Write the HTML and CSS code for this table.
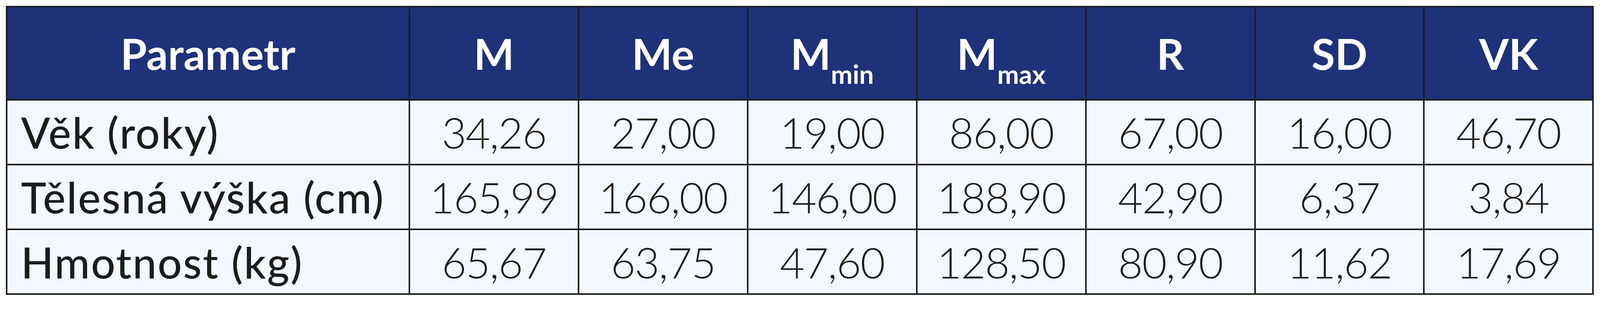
FILE: index.html
```html
<!DOCTYPE html>
<html lang="cs">
<head>
<meta charset="utf-8">
<title>Parametry</title>
<link rel="stylesheet" href="styles.css">
</head>
<body>
<div class="wrap">
<table class="stats">
  <colgroup>
    <col class="c-label">
    <col class="c-num"><col class="c-num"><col class="c-num"><col class="c-num"><col class="c-num"><col class="c-num"><col class="c-num">
  </colgroup>
  <thead>
    <tr>
      <th>Parametr</th>
      <th>M</th>
      <th>Me</th>
      <th>M<span class="sub">min</span></th>
      <th>M<span class="sub">max</span></th>
      <th>R</th>
      <th>SD</th>
      <th>VK</th>
    </tr>
  </thead>
  <tbody>
    <tr>
      <td class="label">Věk (roky)</td>
      <td>34,26</td><td>27,00</td><td>19,00</td><td>86,00</td><td>67,00</td><td>16,00</td><td>46,70</td>
    </tr>
    <tr>
      <td class="label">Tělesná výška (cm)</td>
      <td>165,99</td><td>166,00</td><td>146,00</td><td>188,90</td><td>42,90</td><td>6,37</td><td>3,84</td>
    </tr>
    <tr>
      <td class="label">Hmotnost (kg)</td>
      <td>65,67</td><td>63,75</td><td>47,60</td><td>128,50</td><td>80,90</td><td>11,62</td><td>17,69</td>
    </tr>
  </tbody>
</table>
</div>
</body>
</html>
```

FILE: styles.css
```css
:root {
  /* one reference pixel, relative to the 4195px-wide canvas */
  --u: calc(100vw / 4195);
}

html, body {
  margin: 0;
  padding: 0;
  background: #ffffff;
  overflow: hidden;
}

.wrap {
  padding: calc(var(--u) * 15) 0 0 calc(var(--u) * 15);
}

.stats {
  border-collapse: separate;
  border-spacing: 0;
  table-layout: fixed;
  width: calc(var(--u) * 4164);
  border-top: calc(var(--u) * 5) solid #1d1d1f;
  border-left: calc(var(--u) * 5) solid #1d1d1f;
  font-family: Lato, "Open Sans", "DejaVu Sans", sans-serif;
  font-size: calc(var(--u) * 112);
  line-height: 1.2;
  color: #1c1c1c;
}

.c-label { width: calc(var(--u) * 1046); }
.c-num { width: calc(var(--u) * 439); }

.stats th,
.stats td {
  padding: 0;
  border-right: calc(var(--u) * 5) solid #1d1d1f;
  border-bottom: calc(var(--u) * 5) solid #1d1d1f;
  text-align: center;
  vertical-align: middle;
  white-space: nowrap;
}

.stats th {
  height: calc(var(--u) * 241);
  background: #1f3179;
  color: #ffffff;
  font-weight: 700;
}

.stats td {
  height: calc(var(--u) * 166);
  background: #f2f8fd;
  font-weight: 300;
  letter-spacing: calc(var(--u) * -2);
}

.stats td.label {
  text-align: left;
  padding-left: calc(var(--u) * 36);
  font-weight: 500;
  letter-spacing: calc(var(--u) * 3);
}

.sub {
  font-size: calc(var(--u) * 68);
  line-height: 0;
  vertical-align: calc(var(--u) * -37);
}
```
